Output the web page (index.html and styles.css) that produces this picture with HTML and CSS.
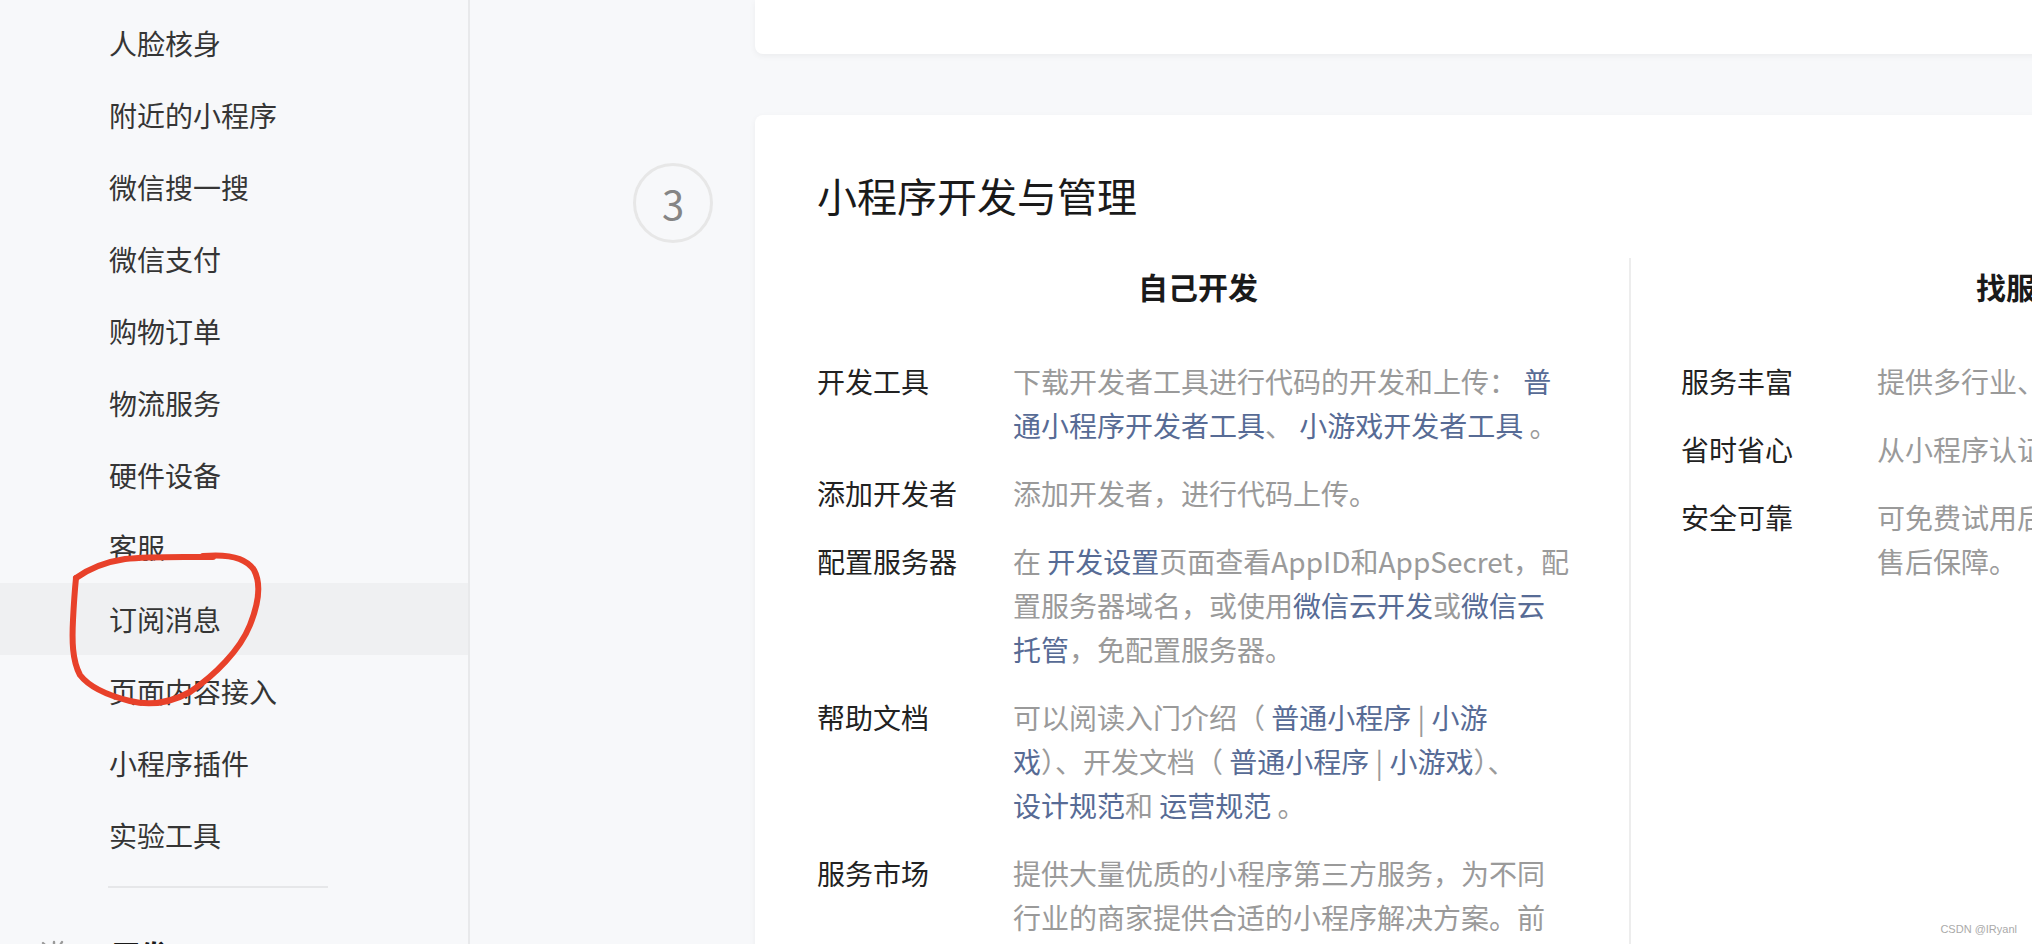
FILE: index.html
```html
<!DOCTYPE html>
<html lang="zh-CN">
<head>
  <meta charset="UTF-8">
  <meta name="viewport" content="width=device-width, initial-scale=1.0">
  <title>小程序开发与管理</title>
  <link rel="stylesheet" href="styles.css">
</head>
<body>
  <div class="layout">
    <div class="sidebar">
      <ul class="menu">
        <li>人脸核身</li>
        <li>附近的小程序</li>
        <li>微信搜一搜</li>
        <li>微信支付</li>
        <li>购物订单</li>
        <li>物流服务</li>
        <li>硬件设备</li>
        <li>客服</li>
        <li class="active">订阅消息</li>
        <li>页面内容接入</li>
        <li>小程序插件</li>
        <li>实验工具</li>
      </ul>
      <div class="menu-divider"></div>
      <div class="menu-group">
        <svg viewBox="0 0 28 28" fill="none" stroke="#9a9a9a" stroke-width="2.4" stroke-linecap="round">
          <path d="M3 3 L8 8"/>
          <path d="M22 2 L16 12"/>
          <path d="M14 2 V10"/>
          <rect x="3" y="10" width="22" height="15" rx="2"/>
        </svg>
        <span>开发</span>
      </div>
    </div>

    <div class="main">
      <div class="step">
        <div class="step-num"></div>
        <div class="card card-tail"></div>
      </div>

      <div class="step">
        <div class="step-num"><span class="step-circle">3</span></div>
        <div class="card card-body">
          <h1 class="card-title">小程序开发与管理</h1>
          <div class="columns">
            <div class="col">
              <h3 class="col-title">自己开发</h3>
              <div class="row">
                <div class="row-label">开发工具</div>
                <div class="row-desc">下载开发者工具进行代码的开发和上传： <a href="#">普<br>通小程序开发者工具</a>、 <a href="#">小游戏开发者工具</a> 。</div>
              </div>
              <div class="row">
                <div class="row-label">添加开发者</div>
                <div class="row-desc">添加开发者，进行代码上传。</div>
              </div>
              <div class="row">
                <div class="row-label">配置服务器</div>
                <div class="row-desc">在 <a href="#">开发设置</a>页面查看AppID和AppSecret，配<br>置服务器域名，或使用<a href="#">微信云开发</a>或<a href="#">微信云<br>托管</a>，免配置服务器。</div>
              </div>
              <div class="row">
                <div class="row-label">帮助文档</div>
                <div class="row-desc">可以阅读入门介绍（ <a href="#">普通小程序</a> | <a href="#">小游<br>戏</a>）、开发文档（ <a href="#">普通小程序</a> | <a href="#">小游戏</a>）、<br><a href="#">设计规范</a>和 <a href="#">运营规范</a> 。</div>
              </div>
              <div class="row">
                <div class="row-label">服务市场</div>
                <div class="row-desc">提供大量优质的小程序第三方服务，为不同<br>行业的商家提供合适的小程序解决方案。前<br>往<a href="#">服务市场</a>。</div>
              </div>
            </div>

            <div class="col">
              <h3 class="col-title">找服务商</h3>
              <div class="row">
                <div class="row-label">服务丰富</div>
                <div class="row-desc">提供多行业、多场景的小程序开发服务。</div>
              </div>
              <div class="row">
                <div class="row-label">省时省心</div>
                <div class="row-desc">从小程序认证到开发上线，全程省心。</div>
              </div>
              <div class="row">
                <div class="row-label">安全可靠</div>
                <div class="row-desc">可免费试用后再购买，平台提供交易担保与<br>售后保障。</div>
              </div>
            </div>
          </div>
        </div>
      </div>
    </div>

    <svg class="annotation" viewBox="0 0 2032 944" fill="none" stroke="#e8412a" stroke-width="6" stroke-linecap="round" stroke-linejoin="round">
      <path d="M76 578 C90 568 105 562 125 559 C150 556 185 557 213 557"/>
      <path d="M203 556 C225 554 245 556 254 570 C262 585 258 605 250 625 C240 650 215 675 190 692 C170 703 150 706 130 701 C110 696 90 688 80 675 C72 660 72 640 73 620 C74 600 75 588 76 578"/>
    </svg>

    <div class="watermark">CSDN @IRyanl</div>
  </div>
</body>
</html>
```

FILE: styles.css
```css
body {
  margin: 0;
  font-family: "Noto Sans CJK SC", sans-serif;
  background-color: #f7f8fa;
  overflow: hidden;
}

.layout {
  position: relative;
  display: flex;
  height: 944px;
  overflow: hidden;
}

/* sidebar */
.sidebar {
  width: 468px;
  flex-shrink: 0;
  padding-top: 7px;
  background-color: #f7f8fa;
  border-right: 2px solid #e8e9eb;
}

.menu {
  list-style: none;
  margin: 0;
  padding: 0;
}

.menu li {
  height: 72px;
  line-height: 72px;
  padding-left: 109px;
  font-size: 28px;
  color: #353535;
}

.menu li.active {
  background-color: #eff0f2;
}

.menu-divider {
  width: 220px;
  height: 2px;
  margin: 15px 0 0 108px;
  background-color: #e6e7e9;
}

.menu-group {
  display: flex;
  align-items: center;
  height: 40px;
  margin-top: 46px;
  padding-left: 40px;
  font-size: 28px;
  font-weight: 600;
  color: #1a1a1a;
}

.menu-group svg {
  width: 28px;
  height: 28px;
  margin-right: 44px;
}

/* main */
.main {
  flex: 1;
  min-width: 0;
  overflow: hidden;
}

.step {
  display: flex;
}

.step + .step {
  margin-top: 61px;
}

.step-num {
  width: 285px;
  flex-shrink: 0;
  display: flex;
  justify-content: flex-end;
  align-items: flex-start;
  padding-right: 42px;
  box-sizing: border-box;
}

.step-circle {
  display: flex;
  align-items: center;
  justify-content: center;
  width: 80px;
  height: 80px;
  margin-top: 48px;
  box-sizing: border-box;
  border: 3px solid #e7e7e7;
  border-radius: 50%;
  font-size: 40px;
  color: #858585;
}

.card {
  width: 1748px;
  flex-shrink: 0;
  background-color: white;
  border-radius: 8px;
  box-shadow: 0px 2px 6px rgba(0, 0, 0, 0.05);
}

.card-tail {
  height: 54px;
  border-radius: 0 0 8px 8px;
}

.card-body {
  padding: 52px 62px 0;
  box-sizing: border-box;
}

.card-title {
  margin: 0 0 35px;
  font-size: 40px;
  line-height: 56px;
  font-weight: normal;
  color: #1a1a1a;
}

.columns {
  display: flex;
}

.col {
  width: 812px;
  flex-shrink: 0;
  box-sizing: border-box;
  padding-right: 50px;
}

.col + .col {
  padding-left: 50px;
  border-left: 2px solid #ededed;
}

.col-title {
  margin: 0 0 45px;
  text-align: center;
  font-size: 30px;
  line-height: 56px;
  font-weight: 600;
  color: #1a1a1a;
}

.row {
  display: flex;
  margin-bottom: 24px;
  font-size: 28px;
  line-height: 44px;
}

.row-label {
  width: 196px;
  flex-shrink: 0;
  color: #222;
}

.row-desc {
  flex: 1;
  white-space: nowrap;
  color: #9a9a9a;
}

.row-desc a {
  color: #576b95;
  text-decoration: none;
}

/* screenshot markup on top */
.annotation {
  position: absolute;
  top: 0;
  left: 0;
  width: 2032px;
  height: 944px;
  pointer-events: none;
}

.watermark {
  position: absolute;
  right: 15px;
  bottom: 9px;
  font-family: "Liberation Sans", Arial, sans-serif;
  font-size: 11px;
  color: #aaa;
}
```
